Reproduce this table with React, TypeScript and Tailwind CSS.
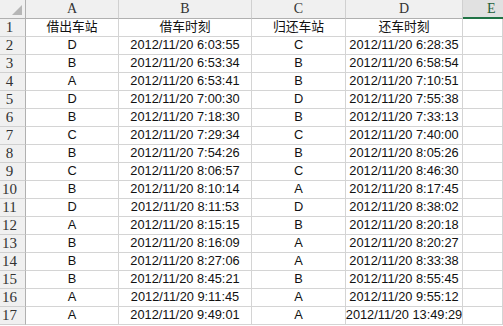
import React from "react";

const rows: [string, string, string, string][] = [
  ["D", "2012/11/20 6:03:55", "C", "2012/11/20 6:28:35"],
  ["B", "2012/11/20 6:53:34", "B", "2012/11/20 6:58:54"],
  ["A", "2012/11/20 6:53:41", "B", "2012/11/20 7:10:51"],
  ["D", "2012/11/20 7:00:30", "D", "2012/11/20 7:55:38"],
  ["B", "2012/11/20 7:18:30", "B", "2012/11/20 7:33:13"],
  ["C", "2012/11/20 7:29:34", "C", "2012/11/20 7:40:00"],
  ["B", "2012/11/20 7:54:26", "B", "2012/11/20 8:05:26"],
  ["C", "2012/11/20 8:06:57", "C", "2012/11/20 8:46:30"],
  ["B", "2012/11/20 8:10:14", "A", "2012/11/20 8:17:45"],
  ["D", "2012/11/20 8:11:53", "D", "2012/11/20 8:38:02"],
  ["A", "2012/11/20 8:15:15", "B", "2012/11/20 8:20:18"],
  ["B", "2012/11/20 8:16:09", "A", "2012/11/20 8:20:27"],
  ["B", "2012/11/20 8:27:06", "A", "2012/11/20 8:33:38"],
  ["B", "2012/11/20 8:45:21", "B", "2012/11/20 8:55:45"],
  ["A", "2012/11/20 9:11:45", "A", "2012/11/20 9:55:12"],
  ["A", "2012/11/20 9:49:01", "A", "2012/11/20 13:49:29"],
];

const dataFont = { fontFamily: '"Liberation Sans", "Noto Sans CJK SC", sans-serif' };
const headFont = { fontFamily: '"Liberation Serif", "Noto Sans CJK SC", serif' };

function Cell({ children }: { children?: React.ReactNode }) {
  return (
    <div
      className="h-[18px] flex items-center justify-center border-r border-b border-[#d4d4d4] bg-white text-[12.8px] text-[#111] whitespace-nowrap overflow-visible leading-none"
      style={dataFont}
    >
      {children}
    </div>
  );
}

function RowHead({ n }: { n: number }) {
  return (
    <div
      className="h-[18px] flex items-center justify-center pr-[6px] border-r border-b border-r-[#b0b0b0] border-b-[#d0d0d0] bg-[#f0f0f0] text-[15px] text-[#333] leading-none"
      style={headFont}
    >
      {n}
    </div>
  );
}

export default function App() {
  const letters = ["A", "B", "C", "D"];
  return (
    <div className="w-[503px] h-[326px] overflow-hidden bg-white">
      <div className="grid grid-cols-[26px_93px_133px_94px_117px_40px]">
        <div className="h-[19px] relative border-r border-b border-[#b0b0b0] bg-[#f0f0f0]">
          <svg className="absolute right-[3px] bottom-[3px]" width="10" height="10" viewBox="0 0 10 10">
            <polygon points="10,0 10,10 0,10" fill="#b6b6b6" />
          </svg>
        </div>
        {letters.map((l) => (
          <div
            key={l}
            className="h-[19px] flex items-center justify-center border-r border-b border-r-[#d0d0d0] border-b-[#b0b0b0] bg-[#f0f0f0] text-[14px] text-[#333] leading-none"
            style={headFont}
          >
            {l}
          </div>
        ))}
        <div
          className="h-[19px] flex items-center justify-start pl-[24px] border-b-2 border-[#217346] bg-[#e1e1e1] text-[14px] text-[#1d5e39] leading-none whitespace-nowrap overflow-hidden"
          style={headFont}
        >
          E
        </div>

        <RowHead n={1} />
        <Cell>借出车站</Cell>
        <Cell>借车时刻</Cell>
        <Cell>归还车站</Cell>
        <Cell>还车时刻</Cell>
        <Cell />

        {rows.map((r, i) => (
          <React.Fragment key={i}>
            <RowHead n={i + 2} />
            <Cell>{r[0]}</Cell>
            <Cell>{r[1]}</Cell>
            <Cell>{r[2]}</Cell>
            <Cell>{r[3]}</Cell>
            <Cell />
          </React.Fragment>
        ))}
      </div>
    </div>
  );
}
